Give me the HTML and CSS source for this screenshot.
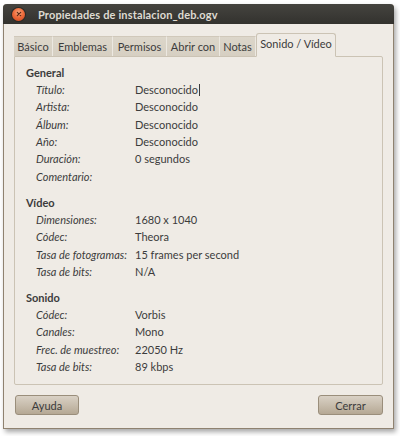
FILE: index.html
```html
<!DOCTYPE html>
<html lang="es">
<head>
<meta charset="utf-8">
<title>Propiedades de instalacion_deb.ogv</title>
<link rel="stylesheet" href="styles.css">
</head>
<body>
<div class="window">
  <div class="titlebar">
    <span class="close"><svg width="12" height="12" viewBox="0 0 12 12"><path d="M4.3 4.3 L7.7 7.7 M7.7 4.3 L4.3 7.7" stroke="#5a2a16" stroke-width="1.2" stroke-linecap="round"/></svg></span>
    <span class="title">Propiedades de instalacion_deb.ogv</span>
  </div>
  <div class="content">
    <div class="tabs">
      <div class="tab t1">Básico</div>
      <div class="tab t2">Emblemas</div>
      <div class="tab t3">Permisos</div>
      <div class="tab t4">Abrir con</div>
      <div class="tab t5">Notas</div>
      <div class="tab active">Sonido / Vídeo</div>
    </div>
    <div class="panel">
      <section class="group">
        <h2>General</h2>
        <div class="grid">
          <span class="k">Título:</span><span class="v">Desconocido<span class="caret"></span></span>
          <span class="k">Artista:</span><span class="v">Desconocido</span>
          <span class="k">Álbum:</span><span class="v">Desconocido</span>
          <span class="k">Año:</span><span class="v">Desconocido</span>
          <span class="k">Duración:</span><span class="v">0 segundos</span>
          <span class="k">Comentario:</span><span class="v"></span>
        </div>
      </section>
      <section class="group">
        <h2>Vídeo</h2>
        <div class="grid">
          <span class="k">Dimensiones:</span><span class="v">1680 x 1040</span>
          <span class="k">Códec:</span><span class="v">Theora</span>
          <span class="k">Tasa de fotogramas:</span><span class="v">15 frames per second</span>
          <span class="k">Tasa de bits:</span><span class="v">N/A</span>
        </div>
      </section>
      <section class="group">
        <h2>Sonido</h2>
        <div class="grid">
          <span class="k">Códec:</span><span class="v">Vorbis</span>
          <span class="k">Canales:</span><span class="v">Mono</span>
          <span class="k">Frec. de muestreo:</span><span class="v">22050 Hz</span>
          <span class="k">Tasa de bits:</span><span class="v">89 kbps</span>
        </div>
      </section>
    </div>
    <div class="buttons">
      <button class="btn help">Ayuda</button>
      <button class="btn">Cerrar</button>
    </div>
  </div>
</div>
</body>
</html>
```

FILE: styles.css
```css
* { box-sizing: border-box; }
html, body { margin: 0; padding: 0; }
body {
  background: #ffffff;
  width: 400px;
  height: 436px;
  font-family: Lato, "Noto Sans", sans-serif;
  font-size: 11px;
  color: #3c3c3c;
}
.window {
  margin: 4px 0 0 3px;
  width: 391px;
  height: 425px;
  background: #efebe5;
  border: 1px solid #8f8270;
  border-top: none;
  border-radius: 4px 4px 0 0;
  box-shadow: 2px 3px 5px rgba(0,0,0,0.35);
  display: flex;
  flex-direction: column;
}
.titlebar {
  height: 20px;
  background: linear-gradient(#45443f, #3a3935 60%, #33322e);
  border-radius: 4px 4px 0 0;
  display: flex;
  align-items: center;
  padding-left: 9px;
  margin: 0 -1px;
}
.close {
  width: 13px;
  height: 13px;
  border-radius: 50%;
  background: radial-gradient(circle at 50% 35%, #f7a77e 0%, #ee6c3c 45%, #c9431a 100%);
  box-shadow: 0 0 0 1px #2a2926;
  display: flex;
  align-items: center;
  justify-content: center;
}
.title {
  margin-left: 13px;
  font-weight: bold;
  font-size: 11px;
  color: #dfdbd2;
  letter-spacing: 0.15px;
}
.content {
  flex: 1;
  padding: 9px 10px 0 10px;
  display: flex;
  flex-direction: column;
}
.tabs {
  display: flex;
  align-items: flex-end;
  height: 24px;
  position: relative;
  z-index: 1;
}
.tab {
  height: 20px;
  display: flex;
  align-items: center;
  justify-content: center;
  background: linear-gradient(#dcd6ca, #d6cfc2);
  border-top: 1px solid #d0c8ba;
  border-right: 1px solid #ece8e1;
  color: #3c3c3c;
  margin-bottom: 1px;
}
.t1 { width: 39px; }
.t2 { width: 60px; }
.t3 { width: 54px; }
.t4 { width: 53px; }
.t5 { width: 36px; }
.tab.active {
  width: 80px;
  height: 24px;
  margin-bottom: -0px;
  background: #efebe5;
  border: 1px solid #cbc3b4;
  border-bottom: 1px solid #efebe5;
  border-radius: 3px 3px 0 0;
  padding-bottom: 3px;
}
.panel {
  width: 369px;
  height: 329px;
  margin-top: -1px;
  border: 1px solid #cbc3b4;
  border-radius: 0 2px 2px 2px;
  background: #efebe5;
  padding: 7px 0 0 11px;
}
.group + .group { margin-top: 9px; }
h2 {
  margin: 0;
  font-size: 11px;
  font-weight: bold;
  line-height: 17px;
}
.grid {
  display: grid;
  grid-template-columns: 99px auto;
  grid-auto-rows: 17.3px;
  padding-left: 10px;
  align-items: center;
}
.k { font-style: italic; }
.v { position: relative; }
.caret {
  display: inline-block;
  width: 1px;
  height: 12px;
  background: #3c3c3c;
  vertical-align: -2px;
  margin-left: 1px;
}
.buttons {
  display: flex;
  justify-content: space-between;
  margin-top: 10px;
  padding: 0 0 0 1px;
}
.btn {
  width: 65px;
  height: 20px;
  font-family: Lato, "Noto Sans", sans-serif;
  font-size: 11px;
  color: #3c3c3c;
  background: linear-gradient(#d9d1c5, #c4b9a8 60%, #b5a894);
  border: 1px solid #9a8e7b;
  border-radius: 3px;
  padding: 0;
}
.btn.help { width: 64px; }
```
